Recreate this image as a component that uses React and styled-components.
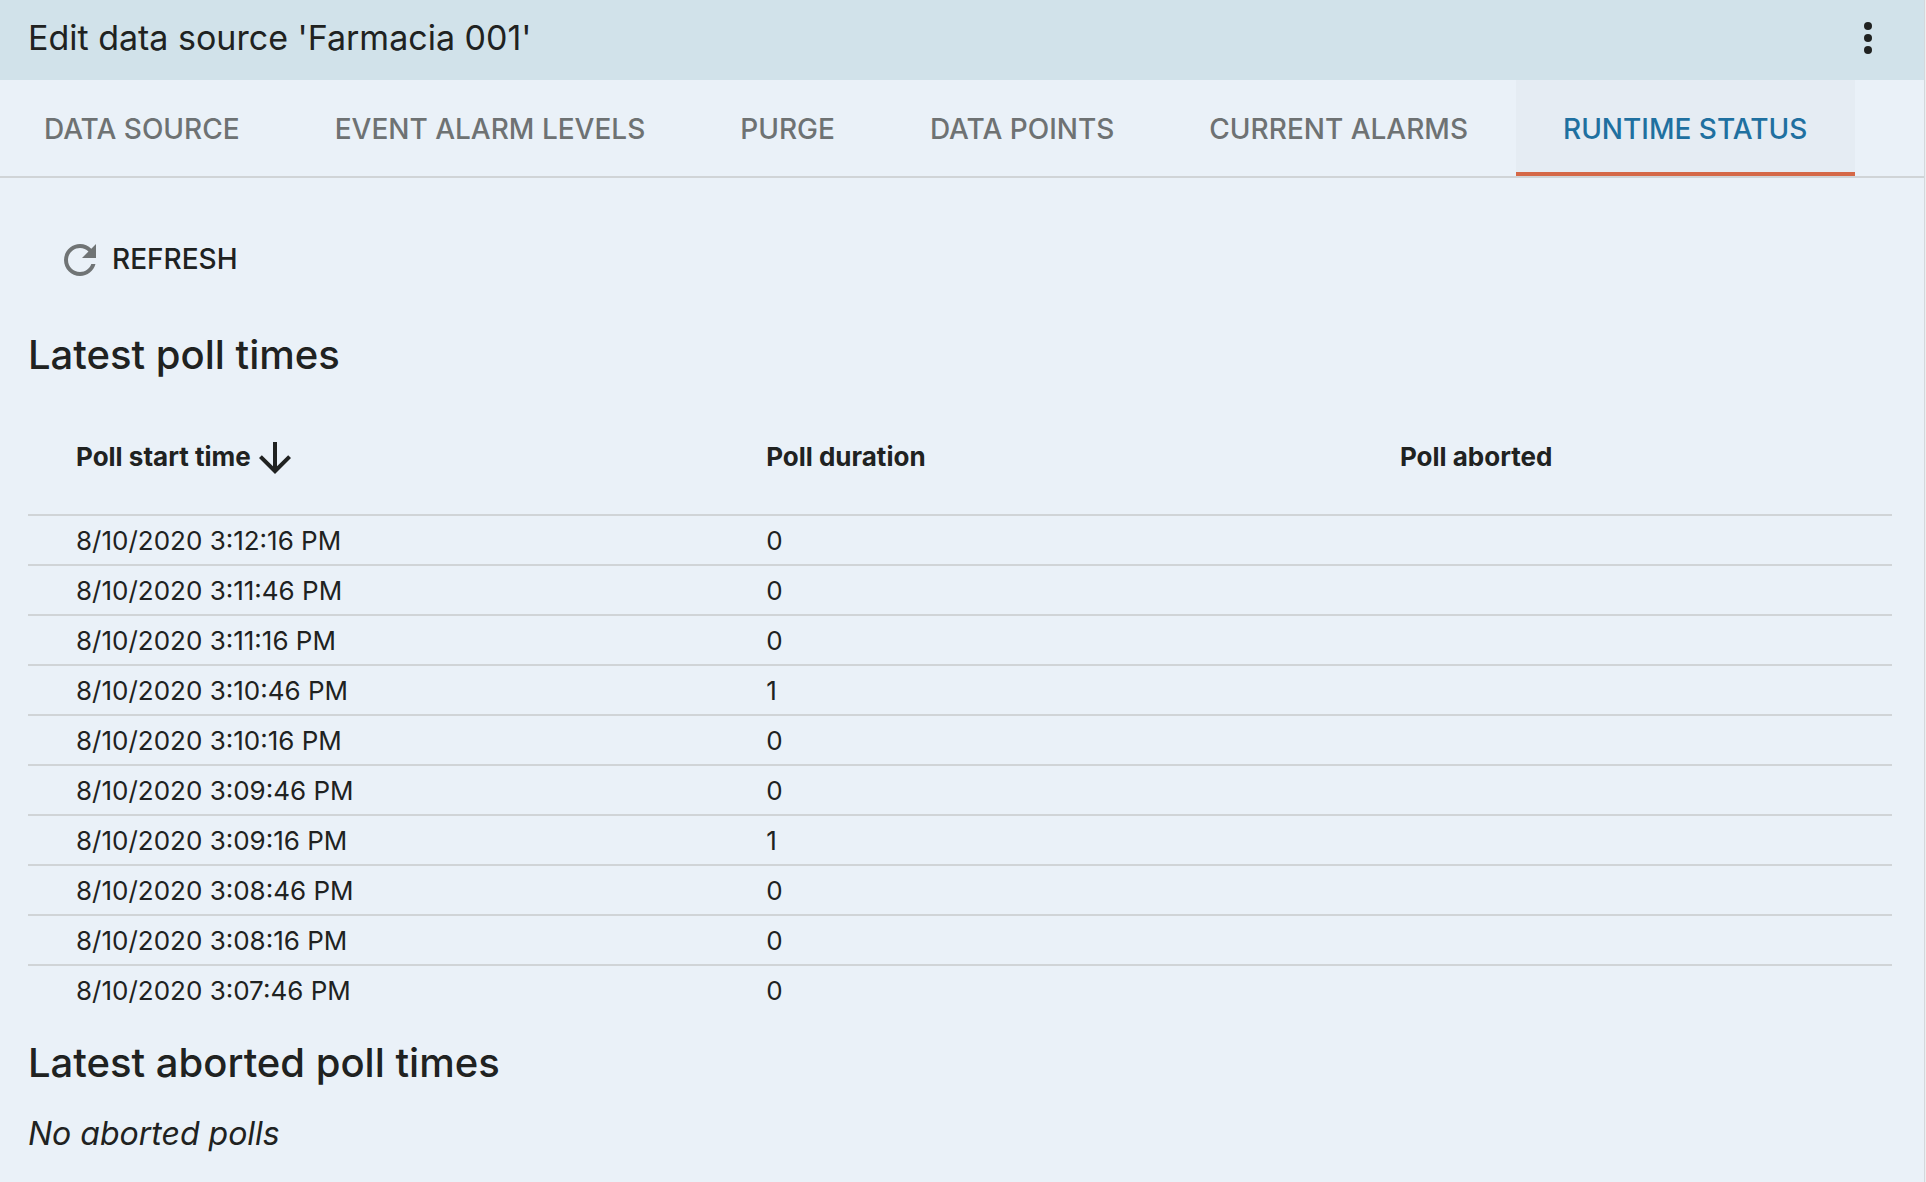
import { useState } from "react";
import styled, { createGlobalStyle } from "styled-components";

const tabs = [
    "Data source",
    "Event alarm levels",
    "Purge",
    "Data points",
    "Current alarms",
    "Runtime status",
];

const polls = [
    { start: "8/10/2020 3:12:16 PM", duration: 0 },
    { start: "8/10/2020 3:11:46 PM", duration: 0 },
    { start: "8/10/2020 3:11:16 PM", duration: 0 },
    { start: "8/10/2020 3:10:46 PM", duration: 1 },
    { start: "8/10/2020 3:10:16 PM", duration: 0 },
    { start: "8/10/2020 3:09:46 PM", duration: 0 },
    { start: "8/10/2020 3:09:16 PM", duration: 1 },
    { start: "8/10/2020 3:08:46 PM", duration: 0 },
    { start: "8/10/2020 3:08:16 PM", duration: 0 },
    { start: "8/10/2020 3:07:46 PM", duration: 0 },
];

export default function App() {
    const [active, setActive] = useState("Runtime status");

    return (
        <>
            <GlobalStyle />
            <Panel>
                <Toolbar>
                    <Title>Edit data source 'Farmacia 001'</Title>
                    <IconButton type="button" aria-label="More options">
                        <Icon viewBox="0 0 24 24">
                            <circle cx="12" cy="6" r="2" />
                            <circle cx="12" cy="12" r="2" />
                            <circle cx="12" cy="18" r="2" />
                        </Icon>
                    </IconButton>
                </Toolbar>

                <Tabs role="tablist">
                    {tabs.map((tab) => (
                        <Tab
                            key={tab}
                            type="button"
                            role="tab"
                            aria-selected={tab === active}
                            $active={tab === active}
                            onClick={() => setActive(tab)}
                        >
                            {tab}
                        </Tab>
                    ))}
                </Tabs>

                <Content>
                    <RefreshButton type="button">
                        <Icon viewBox="0 0 24 24" $muted>
                            <path d="M17.65 6.35C16.2 4.9 14.21 4 12 4c-4.42 0-7.99 3.58-7.99 8s3.57 8 7.99 8c3.73 0 6.84-2.55 7.73-6h-2.08c-.82 2.33-3.04 4-5.65 4-3.31 0-6-2.69-6-6s2.69-6 6-6c1.66 0 3.14.69 4.22 1.78L13 11h7V4l-2.35 2.35z" />
                        </Icon>
                        <ButtonLabel>Refresh</ButtonLabel>
                    </RefreshButton>

                    <Heading>Latest poll times</Heading>
                    <Table>
                        <colgroup>
                            <Col $width="39.6%" />
                            <Col $width="34%" />
                            <Col />
                        </colgroup>
                        <thead>
                            <tr>
                                <th scope="col" aria-sort="descending">
                                    <SortButton type="button">
                                        <ButtonLabel>Poll start time</ButtonLabel>
                                        <Icon viewBox="0 0 24 24">
                                            <path d="M20 12l-1.41-1.41L13 16.17V4h-2v12.17l-5.58-5.59L4 12l8 8 8-8z" />
                                        </Icon>
                                    </SortButton>
                                </th>
                                <th scope="col">
                                    <ButtonLabel>Poll duration</ButtonLabel>
                                </th>
                                <th scope="col">
                                    <ButtonLabel>Poll aborted</ButtonLabel>
                                </th>
                            </tr>
                        </thead>
                        <tbody>
                            {polls.map((poll) => (
                                <tr key={poll.start}>
                                    <td>{poll.start}</td>
                                    <td>{poll.duration}</td>
                                    <td></td>
                                </tr>
                            ))}
                        </tbody>
                    </Table>

                    <Heading>Latest aborted poll times</Heading>
                    <Empty>No aborted polls</Empty>
                </Content>
            </Panel>
        </>
    );
}

const GlobalStyle = createGlobalStyle`
    * {
        box-sizing: border-box;
    }
    body {
        margin: 0;
        background: #eceff1;
        color: #202221;
        font-family: Inter, "Liberation Sans", sans-serif;
    }
    button {
        padding: 0;
        border: 0;
        background: none;
        color: inherit;
        font: inherit;
        cursor: pointer;
    }
`

const Panel = styled.main`
    min-height: 100vh;
    margin-right: 1px;
    border-right: 1px solid #d3d8dc;
    background: #eaf1f8;
`

const Toolbar = styled.header`
    display: flex;
    align-items: center;
    justify-content: space-between;
    height: 80px;
    padding: 0 32px 4px 28px;
    background: #d1e2ea;
`

const Title = styled.h1`
    margin: 0;
    font-size: 34px;
    font-weight: 400;
    line-height: 40px;
`

const Icon = styled.svg`
    display: block;
    flex: none;
    width: 48px;
    height: 48px;
    fill: ${({ $muted }) => ($muted ? "#707475" : "currentColor")};
`

const IconButton = styled.button`
    flex: none;
`

const Tabs = styled.div`
    display: flex;
    border-bottom: 2px solid #d0d4d7;
`

const Tab = styled.button`
    && {
        height: 96px;
        padding: 6px 48px 0 47px;
        border-bottom: 4px solid ${({ $active }) => ($active ? "#d56847" : "transparent")};
        background: ${({ $active }) => ($active ? "#e5ecf3" : "none")};
        color: ${({ $active }) => ($active ? "#1f70a0" : "#6e7273")};
        font-size: 28px;
        font-weight: 500;
        text-transform: uppercase;
        white-space: nowrap;
    }
    &&:first-child {
        padding-left: 44px;
    }
`

const Content = styled.section`
    padding: 46px 32px 28px 28px;
`

const RefreshButton = styled.button`
    && {
        display: flex;
        align-items: center;
        gap: 8px;
        height: 72px;
        margin-bottom: 35px;
        padding: 0 28px;
        font-size: 28px;
        font-weight: 500;
        text-transform: uppercase;
    }
`

const ButtonLabel = styled.span`
    display: block;
    padding-bottom: 3px;
`

const Heading = styled.h2`
    margin: 25px 0 23px;
    font-size: 40px;
    font-weight: 500;
    line-height: 48px;
`

const Table = styled.table`
    width: 100%;
    table-layout: fixed;
    border-spacing: 0;
    font-size: 26px;
    line-height: 32px;
    text-align: left;

    th, td {
        padding: 0 56px 0 0;
    }
    th:first-child, td:first-child {
        padding-left: 48px;
    }
    th {
        height: 112px;
        font-weight: 700;
    }
    td {
        height: 50px;
        padding-top: 2px;
        border-top: 2px solid #d0d4d7;
    }
`

const Col = styled.col`
    width: ${({ $width }) => $width || "auto"};
`

const SortButton = styled.button`
    display: flex;
    align-items: center;
`

const Empty = styled.p`
    margin: 27px 0 0;
    font-size: 32px;
    font-style: italic;
    line-height: 40px;
`
